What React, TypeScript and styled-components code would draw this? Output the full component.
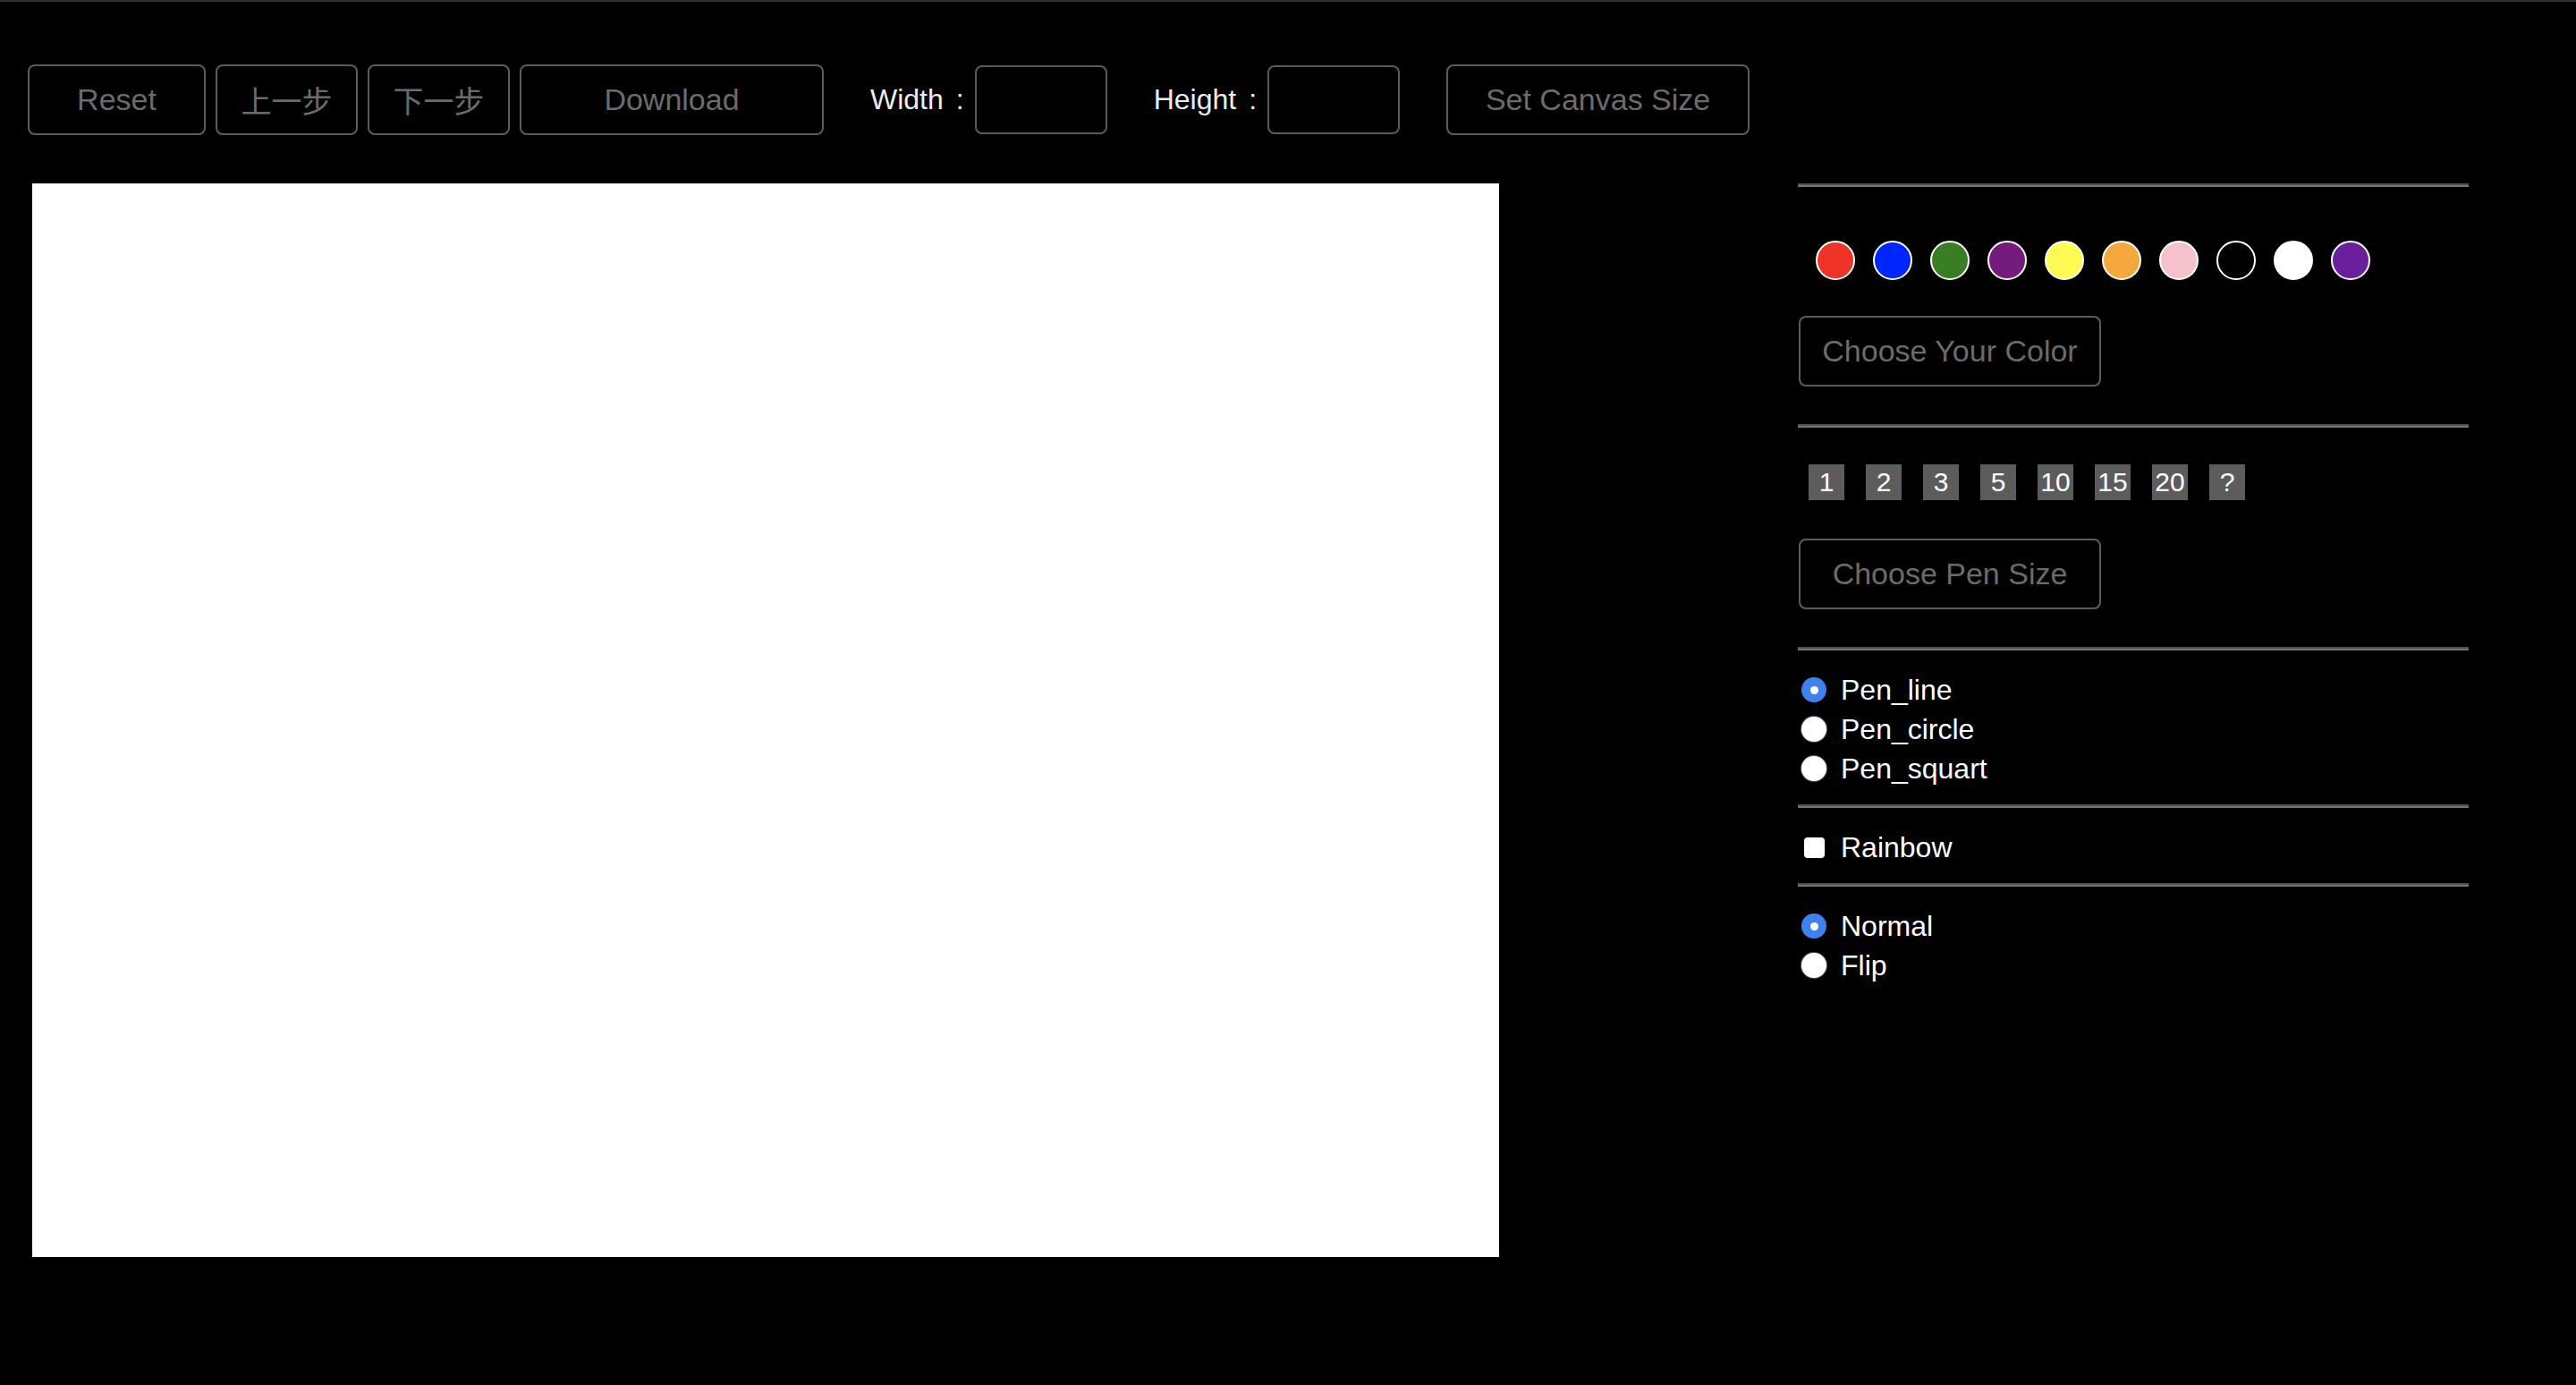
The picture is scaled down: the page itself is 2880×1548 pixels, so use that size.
import React from "react";
import styled, { createGlobalStyle } from "styled-components";

const GlobalStyle = createGlobalStyle`
  html, body {
    margin: 0;
    padding: 0;
    background: #000;
  }
  body {
    font-family: "Liberation Sans", Arial, "Noto Sans CJK SC", sans-serif;
  }
`;

const Page = styled.div`
  min-height: 100vh;
  box-sizing: border-box;
  background: #000;
  border-top: 2px solid #2f2f2f;
  font-family: "Liberation Sans", Arial, "Noto Sans CJK SC", sans-serif;
`;

const Toolbar = styled.div`
  display: flex;
  align-items: center;
  padding: 70px 0 0 31px;
`;

const ButtonGroup = styled.div`
  display: flex;
  align-items: center;
  gap: 11px;
`;

const Button = styled.button<{ $w: number }>`
  width: ${(p) => p.$w}px;
  height: 79px;
  box-sizing: border-box;
  background: #000;
  color: #6b6b6b;
  border: 2px solid #5c5c5c;
  border-radius: 8px;
  font-family: "Liberation Sans", Arial, "Noto Sans CJK SC", sans-serif;
  font-size: 34px;
  padding: 0;
  cursor: pointer;
`;

const Field = styled.label`
  display: flex;
  align-items: center;
  margin-left: 52px;
  color: #ececec;
  font-size: 32px;
`;

const Colon = styled.span`
  margin: 0 12px 0 14px;
`;

const SizeInput = styled.input`
  width: 148px;
  height: 77px;
  box-sizing: border-box;
  background: #000;
  border: 2px solid #5a5a5a;
  border-radius: 8px;
  color: #fff;
  font-size: 28px;
  padding: 0 10px;
  outline: none;
`;

const SetSizeButton = styled(Button)`
  margin-left: 52px;
`;

const Main = styled.div`
  display: flex;
  align-items: flex-start;
  padding: 54px 0 0 36px;
`;

const Canvas = styled.canvas`
  display: block;
  width: 1640px;
  height: 1200px;
  background: #fff;
`;

const Panel = styled.div`
  width: 750px;
  margin-left: 334px;
  display: flex;
  flex-direction: column;
`;

const Rule = styled.hr`
  margin: 0;
  height: 0;
  border: none;
  border-top: 2px solid #505050;
  border-bottom: 2px solid #747474;
`;

const Section = styled.div<{ $top: number; $bottom: number }>`
  display: flex;
  flex-direction: column;
  align-items: flex-start;
  padding: ${(p) => p.$top}px 0 ${(p) => p.$bottom}px;
`;

const Swatches = styled.div`
  display: flex;
  gap: 20px;
  padding-left: 20px;
  margin-bottom: 40px;
`;

const Swatch = styled.span<{ $color: string }>`
  width: 44px;
  height: 44px;
  box-sizing: border-box;
  border-radius: 50%;
  border: 2px solid #fff;
  background: ${(p) => p.$color};
  cursor: pointer;
`;

const Sizes = styled.div`
  display: flex;
  gap: 24px;
  padding-left: 12px;
  margin-bottom: 43px;
`;

const SizeBox = styled.span`
  width: 40px;
  height: 40px;
  display: flex;
  align-items: center;
  justify-content: center;
  background: #5c5c5c;
  color: #fff;
  font-size: 30px;
  cursor: pointer;
`;

const PanelButton = styled(Button)`
  margin-left: 1px;
`;

const OptionRow = styled.label`
  display: flex;
  align-items: center;
  height: 44px;
  color: #fff;
  font-size: 32px;
  cursor: pointer;
`;

const Radio = styled.input.attrs({ type: "radio" })`
  appearance: none;
  width: 28px;
  height: 28px;
  margin: 0 16px 0 4px;
  border-radius: 50%;
  background: #fff;
  box-shadow: 0 0 1px 1px rgba(255, 255, 255, 0.35);
  display: grid;
  place-items: center;
  &:checked {
    background: #3f82ef;
    box-shadow: none;
  }
  &:checked::after {
    content: "";
    width: 9px;
    height: 9px;
    border-radius: 50%;
    background: #fff;
  }
`;

const Checkbox = styled.input.attrs({ type: "checkbox" })`
  appearance: none;
  width: 23px;
  height: 23px;
  margin: 0 18px 0 7px;
  border-radius: 4px;
  background: #fff;
`;

const COLORS = [
  "#ee3426",
  "#0026ff",
  "#3a7e23",
  "#741b7c",
  "#fffb53",
  "#f4a83d",
  "#f5c2cb",
  "#000000",
  "#ffffff",
  "#6a1f9c",
];

const SIZES = ["1", "2", "3", "5", "10", "15", "20", "?"];

export default function App() {
  return (
    <Page>
      <GlobalStyle />
      <Toolbar>
        <ButtonGroup>
          <Button $w={199}>Reset</Button>
          <Button $w={159}>上一步</Button>
          <Button $w={159}>下一步</Button>
          <Button $w={340}>Download</Button>
        </ButtonGroup>
        <Field>
          Width<Colon>:</Colon>
          <SizeInput />
        </Field>
        <Field>
          Height<Colon>:</Colon>
          <SizeInput />
        </Field>
        <SetSizeButton $w={339}>Set Canvas Size</SetSizeButton>
      </Toolbar>
      <Main>
        <Canvas width={1640} height={1200} />
        <Panel>
          <Rule />
          <Section $top={60} $bottom={42}>
            <Swatches>
              {COLORS.map((c, i) => (
                <Swatch key={i} $color={c} />
              ))}
            </Swatches>
            <PanelButton $w={338}>Choose Your Color</PanelButton>
          </Section>
          <Rule />
          <Section $top={41} $bottom={42}>
            <Sizes>
              {SIZES.map((s) => (
                <SizeBox key={s}>{s}</SizeBox>
              ))}
            </Sizes>
            <PanelButton $w={338}>Choose Pen Size</PanelButton>
          </Section>
          <Rule />
          <Section $top={22} $bottom={18}>
            <OptionRow>
              <Radio name="pen" defaultChecked />
              Pen_line
            </OptionRow>
            <OptionRow>
              <Radio name="pen" />
              Pen_circle
            </OptionRow>
            <OptionRow>
              <Radio name="pen" />
              Pen_squart
            </OptionRow>
          </Section>
          <Rule />
          <Section $top={22} $bottom={18}>
            <OptionRow>
              <Checkbox />
              Rainbow
            </OptionRow>
          </Section>
          <Rule />
          <Section $top={22} $bottom={0}>
            <OptionRow>
              <Radio name="mode" defaultChecked />
              Normal
            </OptionRow>
            <OptionRow>
              <Radio name="mode" />
              Flip
            </OptionRow>
          </Section>
        </Panel>
      </Main>
    </Page>
  );
}
